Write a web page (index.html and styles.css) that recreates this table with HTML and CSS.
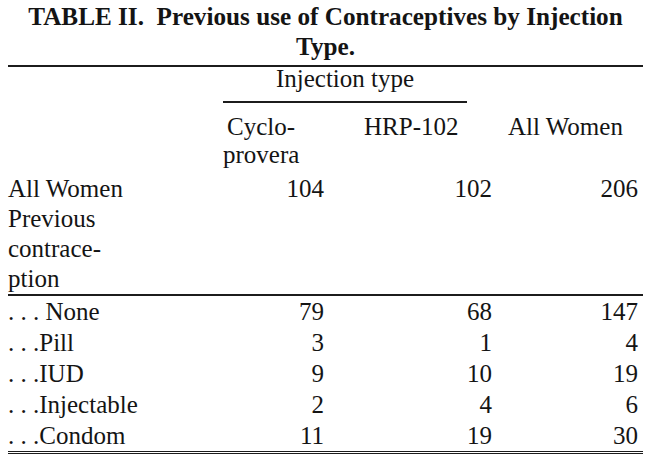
FILE: index.html
```html
<!DOCTYPE html>
<html lang="en">
<head>
<meta charset="utf-8">
<title>Table II</title>
<link rel="stylesheet" href="styles.css">
</head>
<body>
<div class="page">
  <h1 class="title">TABLE II.&nbsp; Previous use of Contraceptives by Injection<br>Type.</h1>
  <div class="rule"></div>
  <div class="row spanrow">
    <div class="spanner">Injection type</div>
  </div>
  <div class="row head">
    <div class="cell"></div>
    <div class="cell h2"><span class="indent">Cyclo-</span><br>provera</div>
    <div class="cell h3">HRP-102</div>
    <div class="cell h4">All Women</div>
  </div>
  <div class="row total">
    <div class="cell label">All Women</div>
    <div class="cell num">104</div>
    <div class="cell num">102</div>
    <div class="cell num">206</div>
  </div>
  <div class="row total">
    <div class="cell label">Previous<br>contrace-<br>ption</div>
  </div>
  <div class="rule mid"></div>
  <div class="row data">
    <div class="cell label">. . . None</div>
    <div class="cell num">79</div>
    <div class="cell num">68</div>
    <div class="cell num">147</div>
  </div>
  <div class="row data">
    <div class="cell label">. . .Pill</div>
    <div class="cell num">3</div>
    <div class="cell num">1</div>
    <div class="cell num">4</div>
  </div>
  <div class="row data">
    <div class="cell label">. . .IUD</div>
    <div class="cell num">9</div>
    <div class="cell num">10</div>
    <div class="cell num">19</div>
  </div>
  <div class="row data">
    <div class="cell label">. . .Injectable</div>
    <div class="cell num">2</div>
    <div class="cell num">4</div>
    <div class="cell num">6</div>
  </div>
  <div class="row data">
    <div class="cell label">. . .Condom</div>
    <div class="cell num">11</div>
    <div class="cell num">19</div>
    <div class="cell num">30</div>
  </div>
  <div class="rule bottom"></div>
</div>
</body>
</html>
```

FILE: styles.css
```css
html, body {
  margin: 0;
  padding: 0;
  background: #ffffff;
}

.page {
  width: 635px;
  padding: 1.5px 0 0 8px;
  font-family: "Liberation Serif", "Times New Roman", serif;
  font-size: 25px;
  color: #141414;
}

.title {
  margin: 0;
  font-size: 25.2px;
  font-weight: bold;
  line-height: 30px;
  text-align: center;
}

.rule {
  margin-top: 3px;
  border-top: 2px solid #1c1c1c;
}

.rule.mid {
  margin-top: 0;
}

.rule.bottom {
  margin-top: 0;
  border-top: 3px double #1c1c1c;
}

.row {
  display: grid;
  grid-template-columns: 215px 101px 168px 146px;
}

.spanrow {
  line-height: 24px;
}

.spanner {
  grid-column: 2 / 4;
  margin-right: 25px;
  padding-bottom: 10px;
  border-bottom: 2px solid #1c1c1c;
  text-align: center;
}

.head {
  margin-top: 10px;
  line-height: 28px;
}

.indent {
  padding-left: 4px;
}

.h3 {
  padding-left: 40px;
}

.h4 {
  padding-left: 16px;
}

.total {
  line-height: 30px;
}

.head + .total {
  margin-top: 5px;
}

.data {
  line-height: 31px;
}

.num {
  text-align: right;
}
```
